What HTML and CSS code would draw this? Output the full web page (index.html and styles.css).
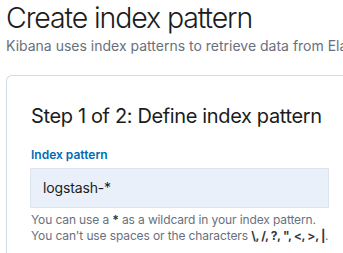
FILE: index.html
```html
<!DOCTYPE html>
<html>
<head>
<meta charset="utf-8">
<link rel="stylesheet" href="styles.css">
</head>
<body>
<div class="page">
  <h1 class="title">Create index pattern</h1>
  <p class="subtitle">Kibana uses index patterns to retrieve data from Elasticsearch indices for things like visualizations.</p>
  <div class="card">
    <h2 class="step">Step 1 of 2: Define index pattern</h2>
    <label class="label">Index pattern</label>
    <div class="input">logstash-*</div>
    <div class="help">
      <div>You can use a <b>*</b> as a wildcard in your index pattern.</div>
      <div>You can't use spaces or the characters <b>\, /, ?, ", &lt;, &gt;, |</b>.</div>
    </div>
  </div>
</div>
</body>
</html>
```
FILE: styles.css
```css
html, body {
  margin: 0;
  padding: 0;
  background: #ffffff;
  overflow: hidden;
}
body {
  font-family: Inter, "Noto Sans", sans-serif;
  color: #1a1c21;
}
.page {
  padding: 0 0 0 6px;
  width: 337px;
  overflow: hidden;
}
.title {
  margin: 0;
  font-size: 28.5px;
  line-height: 36px;
  font-weight: 300;
  letter-spacing: -0.039em;
  color: #1a1c21;
  white-space: nowrap;
}
.subtitle {
  margin: 0;
  font-size: 14px;
  line-height: 20px;
  color: #69707d;
  white-space: nowrap;
  overflow: hidden;
}
.card {
  margin-top: 19px;
  border: 1px solid #d3dae6;
  border-right: 0;
  border-radius: 6px 0 0 6px;
  padding: 26px 24px 24px;
  height: 200px;
}
.step {
  margin: 0;
  font-size: 20px;
  line-height: 28px;
  font-weight: 400;
  letter-spacing: -0.018em;
  color: #1a1c21;
  white-space: nowrap;
}
.label {
  display: block;
  margin-top: 17px;
  font-size: 12px;
  line-height: 16px;
  font-weight: 600;
  color: #006bb4;
}
.input {
  margin-top: 5px;
  width: 299px;
  height: 40px;
  box-sizing: border-box;
  margin-left: -1px;
  padding: 0 12px;
  background: #e9f0fa;
  border: 1px solid #dde4ef;
  font-size: 14px;
  line-height: 38px;
  letter-spacing: -0.01em;
  color: #1a1c21;
}
.help {
  margin-top: 4px;
  font-size: 12px;
  line-height: 16px;
  letter-spacing: -0.01em;
  color: #69707d;
  white-space: nowrap;
}
.help b {
  color: #343741;
  font-weight: 700;
  letter-spacing: -0.03em;
}
```
